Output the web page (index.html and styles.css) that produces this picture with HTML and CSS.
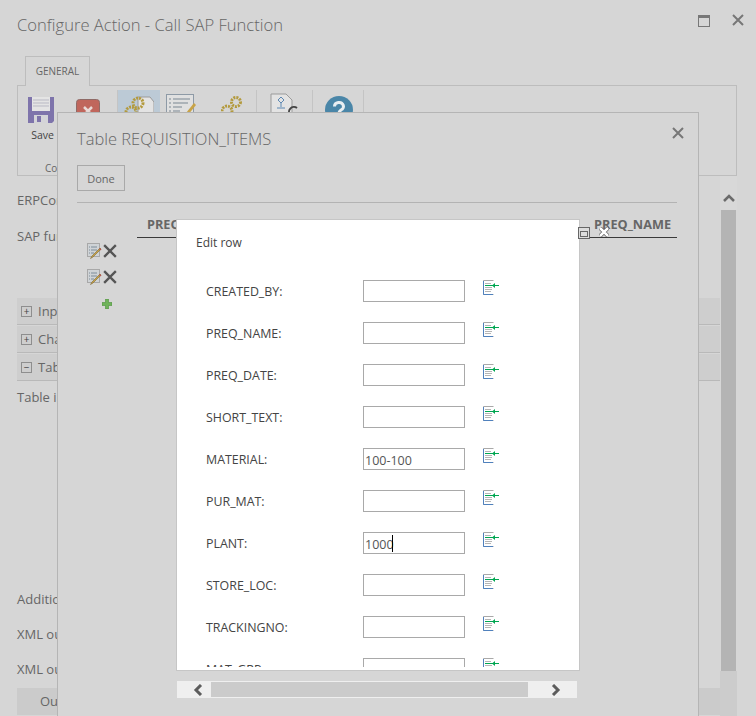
FILE: index.html
```html
<!DOCTYPE html>
<html lang="en">
<head>
  <meta charset="UTF-8">
  <title>Configure Action - Call SAP Function</title>
  <link rel="stylesheet" href="styles.css">
</head>
<body>

  <svg class="defs" width="0" height="0">
    <symbol id="ico-lookup" viewBox="0 0 16 15">
      <path d="M10.5 .5H.5V14.5H10.5" fill="#fff" stroke="#a9a9a9"/>
      <path d="M.5 1V14.5H10" fill="none" stroke="#4f81bd"/>
      <path d="M2 3.500H8M2 7.5H9M2 9.5H9M2 11.5H8" stroke="#b5b5b5"/>
      <path d="M2 5.5H16" stroke="#00a651"/>
      <path d="M9 5.5L12 3V8Z" fill="#00a651"/>
    </symbol>
    <symbol id="ico-edit" viewBox="0 0 15 16">
      <rect x=".5" y=".5" width="12" height="13" fill="#cfd3d6" stroke="#a8a8a8"/>
      <path d="M2 4H3M4 4H10M2 7H3M4 7H10M2 10H3M4 10H7" stroke="#7c8c99"/>
      <path d="M14 6L6 14L3.500 15.500L5 13L13 5Z" fill="#c8a347" stroke="#7c6a38" stroke-width=".6"/>
      <path d="M13 5L14.500 6.500L13.500 7.500L12 6Z" fill="#b5574d"/>
    </symbol>
    <symbol id="ico-x" viewBox="0 0 12 12">
      <path d="M1 1L11 11M11 1L1 11" fill="none" stroke="currentColor" stroke-width="2"/>
    </symbol>
  </svg>

  <div class="window">
    <div class="title-bar">
      <h1 class="title">Configure Action - Call SAP Function</h1>
      <span class="win-max"></span>
      <svg class="win-close"><use href="#ico-x"/></svg>
    </div>

    <div class="tabs"><span class="tab">GENERAL</span></div>

    <div class="ribbon">
      <div class="rb-group rb-first">
        <div class="rb-btn">
          <svg class="rb-ico" width="26" height="26" viewBox="0 0 26 26">
            <path d="M0 0H26V24L24 26H0Z" fill="#7e74ab"/>
            <rect x="4" y="0" width="18" height="14" fill="#e4e4e4"/>
            <path d="M5 3H21M5 6H21M5 9H21" stroke="#b9b9c4"/>
            <rect x="6" y="18" width="14" height="8" fill="#d4d4d8"/>
            <rect x="9" y="19" width="4" height="6" fill="#7e74ab"/>
          </svg>
          <span class="rb-label">Save</span>
        </div>
        <div class="rb-btn rb-cancel">
          <svg class="rb-ico" width="24" height="24" viewBox="0 0 24 24">
            <rect x=".5" y=".5" width="23" height="23" rx="3" fill="#c0665c" stroke="#8f6a66"/>
            <path d="M8 8L16 16M16 8L8 16" stroke="#e8d9d6" stroke-width="2.500"/>
          </svg>
        </div>
        <span class="rb-caption">Commit</span>
      </div>
      <div class="rb-group rb-tools">
        <div class="rb-hot">
          <svg class="rb-ico" width="30" height="24" viewBox="0 0 30 24">
            <path d="M14 2H26L30 7V24H14Z" fill="#e3e3e3" stroke="#9b9b9b"/>
            <circle cx="14" cy="8" r="5" fill="none" stroke="#b39a3d" stroke-width="3" stroke-dasharray="2 1"/>
            <circle cx="7" cy="17" r="5" fill="none" stroke="#b39a3d" stroke-width="3" stroke-dasharray="2 1"/>
          </svg>
        </div>
        <svg class="rb-ico rb-form" width="32" height="24" viewBox="0 0 32 24">
          <rect x=".5" y=".5" width="27" height="23" fill="#e0e0e0" stroke="#8e9aa6"/>
          <path d="M3 5H5M7 5H24M3 9H5M7 9H22M3 13H5M7 13H16M3 17H5M7 17H14" stroke="#7b8792"/>
          <path d="M30 11L22 21L19 23L20 19L28 9Z" fill="#c8a347"/>
        </svg>
        <svg class="rb-ico rb-gears" width="22" height="24" viewBox="0 0 22 24">
          <circle cx="15" cy="7" r="4.500" fill="none" stroke="#b39a3d" stroke-width="3" stroke-dasharray="2 1"/>
          <circle cx="6" cy="16" r="5" fill="none" stroke="#b39a3d" stroke-width="3" stroke-dasharray="2 1"/>
        </svg>
      </div>
      <div class="rb-group rb-flow">
        <svg class="rb-ico" width="32" height="24" viewBox="0 0 32 24">
          <path d="M1 1H16L22 7V24H1Z" fill="#e3e3e3" stroke="#9b9b9b"/>
          <path d="M8 7L11 4L14 7L11 10ZM11 10V14M7 15H15" fill="none" stroke="#5d88b3"/>
          <path d="M27 15A5 5 0 1 0 27 23" fill="none" stroke="#444" stroke-width="2"/>
        </svg>
      </div>
      <div class="rb-group rb-help">
        <svg class="rb-ico" width="28" height="28" viewBox="0 0 28 28">
          <circle cx="14" cy="14" r="14" fill="#4a86a8"/>
          <path d="M9.500 10.500A4.500 4 0 1 1 16 14C14.500 15 14 15.500 14 17.500" fill="none" stroke="#e8eef2" stroke-width="3"/>
        </svg>
      </div>
    </div>

    <div class="panel">
      <div class="form">
        <p class="field-erp">ERPConnection:</p>
        <p class="field-fn">SAP function:</p>
        <div class="acc-row"><span class="acc-box">+</span>Input</div>
        <div class="acc-row"><span class="acc-box">+</span>Changing</div>
        <div class="acc-row"><span class="acc-box">&minus;</span>Tables</div>
        <p class="field-table">Table input</p>
        <p class="field-add">Additional</p>
        <p class="field-xml">XML output</p>
        <p class="field-xml">XML output</p>
        <div class="output-btn">Output</div>
      </div>
      <div class="vscroll">
        <div class="vs-up"><svg width="12" height="8" viewBox="0 0 12 8"><path d="M1 7L6 2L11 7" fill="none" stroke="#6b6b6b" stroke-width="2.500"/></svg></div>
        <div class="vs-thumb"></div>
        <div class="vs-track"></div>
      </div>
    </div>
  </div>

  <div class="dlg-table">
    <div class="dlg-head">
      <h2 class="dlg-title">Table REQUISITION_ITEMS</h2>
      <svg class="dlg-close"><use href="#ico-x"/></svg>
    </div>
    <button class="btn-done">Done</button>
    <div class="sep"></div>
    <div class="grid-wrap">
      <div class="row-tools">
        <div class="tool-row"><svg class="i-edit"><use href="#ico-edit"/></svg><svg class="i-del"><use href="#ico-x"/></svg></div>
        <div class="tool-row"><svg class="i-edit"><use href="#ico-edit"/></svg><svg class="i-del"><use href="#ico-x"/></svg></div>
        <svg class="i-add" viewBox="0 0 10 10"><path d="M3.500 0H6.500V3.500H10V6.500H6.500V10H3.500V6.500H0V3.500H3.500Z" fill="#6fb35a" stroke="#4d8f3c" stroke-width=".6"/></svg>
      </div>
      <div class="grid-head">
        <span>PREQ_NO</span>
        <span>PREQ_NAME</span>
      </div>
    </div>
  </div>

  <div class="dlg-edit">
    <div class="edit-box">
      <span class="edit-max"><span></span></span>
      <svg class="edit-x" viewBox="0 0 10 10"><path d="M1 1L9 9M9 1L1 9" stroke="#555" stroke-width="4"/><path d="M1 1L9 9M9 1L1 9" stroke="#fff" stroke-width="2.500"/></svg>
      <div class="edit-title">Edit row</div>
      <div class="edit-rows">
        <div class="edit-row"><label>CREATED_BY:</label><input type="text"><svg class="i-look"><use href="#ico-lookup"/></svg></div>
        <div class="edit-row"><label>PREQ_NAME:</label><input type="text"><svg class="i-look"><use href="#ico-lookup"/></svg></div>
        <div class="edit-row"><label>PREQ_DATE:</label><input type="text"><svg class="i-look"><use href="#ico-lookup"/></svg></div>
        <div class="edit-row"><label>SHORT_TEXT:</label><input type="text"><svg class="i-look"><use href="#ico-lookup"/></svg></div>
        <div class="edit-row"><label>MATERIAL:</label><input type="text" value="100-100"><svg class="i-look"><use href="#ico-lookup"/></svg></div>
        <div class="edit-row"><label>PUR_MAT:</label><input type="text"><svg class="i-look"><use href="#ico-lookup"/></svg></div>
        <div class="edit-row"><label>PLANT:</label><span class="input-wrap"><input type="text" value="1000"><span class="caret"></span></span><svg class="i-look"><use href="#ico-lookup"/></svg></div>
        <div class="edit-row"><label>STORE_LOC:</label><input type="text"><svg class="i-look"><use href="#ico-lookup"/></svg></div>
        <div class="edit-row"><label>TRACKINGNO:</label><input type="text"><svg class="i-look"><use href="#ico-lookup"/></svg></div>
        <div class="edit-row"><label>MAT_GRP:</label><input type="text"><svg class="i-look"><use href="#ico-lookup"/></svg></div>
      </div>
    </div>
    <div class="hscroll">
      <div class="hs-btn hs-left"><svg width="12" height="12" viewBox="0 0 12 12"><path d="M9 1L4 6L9 11" fill="none" stroke="#5c5c5c" stroke-width="3"/></svg></div>
      <div class="hs-thumb"></div>
      <div class="hs-btn hs-right"><svg width="12" height="12" viewBox="0 0 12 12"><path d="M3 1L8 6L3 11" fill="none" stroke="#5c5c5c" stroke-width="3"/></svg></div>
    </div>
  </div>

</body>
</html>
```

FILE: styles.css
```css
html, body {
  margin: 0;
  height: 716px;
  overflow: hidden;
}

body {
  position: relative;
  background-color: #d6d6d6;
  color: #666;
  font-family: "Open Sans", "Liberation Sans", sans-serif;
  font-size: 13px;
}

.defs {
  position: absolute;
}

p {
  margin: 0;
}

/* ventana de fondo */
.window {
  padding: 0 19px 0 17px;
}

.title-bar {
  display: flex;
  align-items: center;
  height: 56px;
  padding-bottom: 7px;
  box-sizing: border-box;
}

.title {
  flex: 1;
  margin: 0;
  font-size: 16.6px;
  font-weight: 300;
  color: #666;
}

.win-max {
  width: 10px;
  height: 8px;
  border: 1px solid #777;
  border-top-width: 3px;
  margin-top: -8px;
}

.win-close {
  width: 12px;
  height: 12px;
  margin: -9px -7px 0 22px;
  color: #777;
}

.tabs {
  display: flex;
  height: 29px;
  padding-left: 8px;
}

.tab {
  width: 65px;
  height: 30px;
  box-sizing: border-box;
  border: 1px solid #bdbdbd;
  border-bottom: none;
  background-color: #d6d6d6;
  position: relative;
  text-align: center;
  font-size: 10px;
  line-height: 28px;
}

.ribbon {
  display: flex;
  height: 91px;
  box-sizing: border-box;
  border: 1px solid #bdbdbd;
}

.rb-group {
  position: relative;
  display: flex;
  border-right: 1px solid #c4c4c4;
  height: 80px;
  margin-top: 4px;
}

.rb-ico {
  flex-shrink: 0;
}

.rb-first {
  width: 99px;
}

.rb-btn {
  display: flex;
  flex-direction: column;
  align-items: center;
  width: 26px;
  margin: 7px 0 0 10px;
}

.rb-cancel {
  margin: 9px 0 0 21px;
}

.rb-label {
  margin: 5px 0 0 3px;
  font-size: 10.5px;
  color: #444;
}

.rb-caption {
  position: absolute;
  left: 27px;
  top: 71px;
  font-size: 10px;
}

.rb-tools {
  width: 138px;
}

.rb-hot {
  width: 42px;
  height: 30px;
  background-color: #bccad6;
  display: flex;
  justify-content: center;
  padding-top: 5px;
}

.rb-form {
  margin: 4px 0 0 6px;
}

.rb-gears {
  margin: 5px 0 0 23px;
}

.rb-flow {
  width: 56px;
  padding-left: 13px;
  box-sizing: border-box;
  padding-top: 3px;
}

.rb-help {
  width: 51px;
  padding-left: 12px;
  box-sizing: border-box;
  padding-top: 6px;
}

.panel {
  display: flex;
}

.form {
  flex: 1;
}

.field-erp {
  margin-top: 15px;
  line-height: 18px;
}

.field-fn {
  margin-top: 18px;
  line-height: 18px;
}

.acc-row {
  display: flex;
  align-items: center;
  height: 27px;
  margin-bottom: 1px;
  background-color: #cecece;
  border-bottom: 1px solid #b9b9b9;
  box-sizing: border-box;
  padding-left: 4px;
}

.field-fn + .acc-row {
  margin-top: 53px;
}

.acc-box {
  width: 9px;
  height: 9px;
  margin-right: 6px;
  border: 1px solid #8e8e8e;
  font-size: 10px;
  line-height: 8px;
  text-align: center;
  color: #444;
}

.field-table {
  margin-top: 7px;
  line-height: 18px;
}

.field-add {
  margin-top: 184px;
  line-height: 18px;
}

.field-xml {
  margin-top: 17px;
  line-height: 18px;
}

.output-btn {
  height: 27px;
  margin-top: 10px;
  padding-left: 23px;
  background-color: #cbcbcb;
  line-height: 27px;
}

.vscroll {
  display: flex;
  flex-direction: column;
  width: 17px;
  height: 540px;
}

.vs-up {
  height: 34px;
  background-color: #d8d8d8;
  display: flex;
  justify-content: center;
  padding-top: 18px;
  box-sizing: border-box;
}

.vs-thumb {
  height: 461px;
  margin: 0 1px;
  background-color: #b4b4b4;
}

.vs-track {
  flex: 1;
  background-color: #cccccc;
}

/* dialogo de la tabla */
.dlg-table {
  position: absolute;
  left: 57px;
  top: 112px;
  width: 642px;
  height: 620px;
  box-sizing: border-box;
  padding: 0 21px 0 19px;
  background-color: #d6d6d6;
  border: 1px solid #b5b5b5;
}

.dlg-head {
  display: flex;
  justify-content: space-between;
  height: 52px;
}

.dlg-title {
  margin: 14px 0 0;
  font-size: 16.5px;
  font-weight: 300;
  color: #666;
}

.dlg-close {
  width: 12px;
  height: 12px;
  margin: 14px -7px 0 0;
  color: #777;
}

.btn-done {
  display: block;
  width: 48px;
  height: 26px;
  padding: 0;
  border: 1px solid #a9a9a9;
  background-color: #d6d6d6;
  color: #666;
  font-family: inherit;
  font-size: 11px;
}

.sep {
  height: 1px;
  margin-top: 11px;
  background-color: #b3b3b3;
}

.grid-wrap {
  display: flex;
  margin-top: 8px;
}

.row-tools {
  display: flex;
  flex-direction: column;
  align-items: flex-end;
  width: 40px;
  margin: 27px 20px 0 0;
}

.tool-row {
  display: flex;
  align-items: center;
  height: 26px;
}

.i-edit {
  width: 15px;
  height: 16px;
}

.i-del {
  width: 14px;
  height: 14px;
  margin-left: 1px;
  color: #555;
}

.i-add {
  width: 10px;
  height: 10px;
  margin: 9px 5px 0 0;
}

.grid-head {
  flex: 1;
  display: flex;
  justify-content: space-between;
  height: 26px;
  padding: 0 6px 0 10px;
  border-bottom: 1px solid #3a3a3a;
  font-size: 12.7px;
  font-weight: 700;
  line-height: 26px;
  color: #666;
}

/* dialogo editar fila */
.dlg-edit {
  position: absolute;
  left: 176px;
  top: 219px;
  width: 404px;
}

.edit-box {
  position: relative;
  height: 452px;
  box-sizing: border-box;
  padding-bottom: 3px;
  display: flex;
  flex-direction: column;
  background-color: #fff;
  border: 1px solid #c6c6c6;
  color: #444;
}

.edit-max {
  position: absolute;
  right: -11px;
  top: 7px;
  width: 10px;
  height: 10px;
  border: 1px solid #666;
  background-color: #dcdcdc;
  display: flex;
  align-items: flex-end;
  justify-content: center;
}

.edit-max span {
  width: 6px;
  height: 4px;
  margin-bottom: 1px;
  border: 1px solid #666;
}

.edit-x {
  position: absolute;
  right: -30px;
  top: 7px;
  width: 10px;
  height: 10px;
}

.edit-title {
  padding: 15px 0 0 19px;
  height: 46px;
  box-sizing: border-box;
  font-size: 12px;
  line-height: 16px;
}

.edit-rows {
  flex: 1;
  overflow: hidden;
  padding: 14px 0 0 29px;
}

.edit-row {
  display: flex;
  align-items: flex-start;
  height: 42px;
}

.edit-row label {
  width: 157px;
  font-size: 12.4px;
  line-height: 24px;
}

.edit-row input {
  width: 102px;
  height: 22px;
  box-sizing: border-box;
  padding: 2px 1px 0;
  border: 1px solid #a9a9a9;
  border-radius: 0;
  outline: none;
  color: #555;
  font-family: inherit;
  font-size: 12.5px;
}

.input-wrap {
  position: relative;
  display: block;
  height: 22px;
}

/* el cursor de texto, para que no parpadee en la foto */
.caret {
  position: absolute;
  left: 29px;
  top: 3px;
  width: 1px;
  height: 17px;
  background-color: #000;
}

.i-look {
  width: 16px;
  height: 15px;
  margin-left: 18px;
}

.hscroll {
  display: flex;
  height: 17px;
  margin: 10px 0 0 1px;
  width: 400px;
  box-sizing: border-box;
  border-top: 1px solid #efefef;
  border-bottom: 1px solid #efefef;
}

.hs-btn {
  display: flex;
  align-items: center;
  background-color: #efefef;
}

.hs-left {
  width: 34px;
  justify-content: center;
  padding-left: 8px;
  box-sizing: border-box;
}

.hs-thumb {
  width: 317px;
  background-color: #cbcbcb;
}

.hs-right {
  width: 49px;
  justify-content: center;
  padding-left: 6px;
  box-sizing: border-box;
}
```
